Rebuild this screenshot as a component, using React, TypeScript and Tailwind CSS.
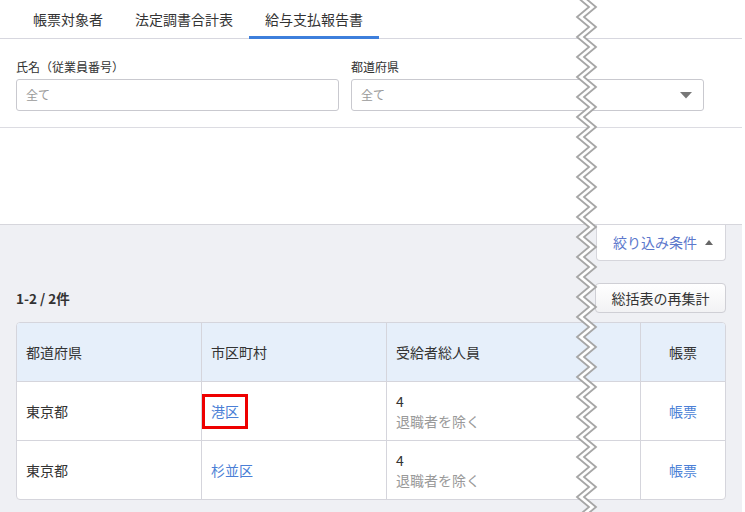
import React from "react";

const font = { fontFamily: '"Noto Sans CJK JP", "Noto Sans", sans-serif' };

function Zigzag() {
  const left: string[] = [];
  const right: string[] = [];
  left.push(`3,-3`);
  right.push(`10,-3`);
  for (let k = 0; k < 54; k++) {
    const y = 7 + 10 * k;
    const x = k % 2 === 0 ? 15 : 3;
    left.push(`${x},${y}`);
    right.push(`${x + 7},${y}`);
  }
  const poly = [...left, ...[...right].reverse()].join(" ");
  return (
    <svg className="absolute left-[574px] top-0" width="28" height="512" viewBox="0 0 28 512">
      <polygon points={poly} fill="#ffffff" />
      <polyline points={left.join(" ")} fill="none" stroke="#a6a6a6" strokeWidth="1.8" />
      <polyline points={right.join(" ")} fill="none" stroke="#a6a6a6" strokeWidth="1.8" />
    </svg>
  );
}

function Tab({ label, active }: { label: string; active?: boolean }) {
  return (
    <div
      className={
        active
          ? "relative flex h-[39px] items-center px-4 text-[14px] text-[#333] border-b-[3px] border-[#3d7fdc] pt-[3px]"
          : "relative flex h-[39px] items-center px-4 text-[14px] text-[#333]"
      }
    >
      {label}
    </div>
  );
}

export default function App() {
  return (
    <div className="relative h-[512px] w-[745px] overflow-hidden bg-white" style={font}>
      <div className="flex h-[512px] w-[742px] flex-col">
        {/* tabs */}
        <div className="flex h-[39px] border-b border-[#d7d7df] pl-[17px]">
          <Tab label="帳票対象者" />
          <Tab label="法定調書合計表" />
          <Tab label="給与支払報告書" active />
        </div>
        {/* filters */}
        <div className="flex gap-[12px] border-b border-[#dcdce2] px-4 pb-[16px] pt-[19px]">
          <div className="flex w-[323px] flex-col">
            <div className="h-[18px] text-[12px] leading-[18px] text-[#333]">氏名（従業員番号）</div>
            <div className="mt-[3px] flex h-[32px] items-center rounded-[3px] border border-[#c9c9cf] pl-[9px] text-[12px] text-[#9a9a9a]">
              全て
            </div>
          </div>
          <div className="flex w-[353px] flex-col">
            <div className="h-[18px] text-[12px] leading-[18px] text-[#333]">都道府県</div>
            <div className="mt-[3px] flex h-[32px] items-center justify-between rounded-[3px] border border-[#c9c9cf] pl-[9px] pr-[11px] text-[12px] text-[#9a9a9a]">
              <span>全て</span>
              <svg width="12" height="7" viewBox="0 0 12 7">
                <polygon points="0,0 12,0 6,6.5" fill="#777" />
              </svg>
            </div>
          </div>
        </div>
        <div className="h-[96px]" />
        {/* gray section */}
        <div className="flex flex-1 flex-col border-t border-[#d6d6dc] bg-[#eff0f4] px-4">
          <div className="flex justify-end">
            <div className="flex h-[36px] w-[130px] items-center justify-between rounded-b-[4px] border border-t-0 border-[#d6d6dc] bg-white pl-[16px] pr-[12px] text-[14px] text-[#5c78cc]">
              <span>絞り込み条件</span>
              <svg width="8" height="5" viewBox="0 0 8 5">
                <polygon points="0,5 8,5 4,0" fill="#666" />
              </svg>
            </div>
          </div>
          <div className="mt-[22px] flex h-[30px] items-center justify-between">
            <span className="text-[13.5px] font-bold text-[#333]">1-2 / 2件</span>
            <button className="flex h-[30px] w-[131px] items-center justify-center rounded-[4px] border border-[#cfcfd5] bg-gradient-to-b from-white to-[#f2f2f4] text-[14px] text-[#333]">
              総括表の再集計
            </button>
          </div>
          <div className="mt-[9px] w-[710px] overflow-hidden rounded-[4px] border border-[#d5d5dc] bg-white text-[14px] text-[#333]">
            <div className="grid h-[58px] grid-cols-[184px_185px_254px_85px] bg-[#e6effa]">
              <div className="flex items-center pl-[9px]">都道府県</div>
              <div className="flex items-center border-l border-[#d5d5dc] pl-[9px]">市区町村</div>
              <div className="flex items-center border-l border-[#d5d5dc] pl-[9px]">受給者総人員</div>
              <div className="flex items-center justify-center border-l border-[#d5d5dc]">帳票</div>
            </div>
            {[
              { city: "港区", mark: true },
              { city: "杉並区", mark: false },
            ].map((r) => (
              <div key={r.city} className="grid h-[59px] grid-cols-[184px_185px_254px_85px] border-t border-[#d5d5dc]">
                <div className="flex items-center pl-[9px]">東京都</div>
                <div className="flex items-center border-l border-[#d5d5dc] pl-[9px]">
                  <span className="relative text-[#4b7fd6]">
                    {r.city}
                    {r.mark && (
                      <span className="absolute -bottom-[7px] -left-[9px] -right-[9px] -top-[7px] border-[3px] border-[#ee0000]" />
                    )}
                  </span>
                </div>
                <div className="flex flex-col justify-center border-l border-[#d5d5dc] pl-[9px] leading-[20px]">
                  <span>4</span>
                  <span className="text-[#999]">退職者を除く</span>
                </div>
                <div className="flex items-center justify-center border-l border-[#d5d5dc] text-[#4b7fd6]">帳票</div>
              </div>
            ))}
          </div>
        </div>
      </div>
      <Zigzag />
    </div>
  );
}
